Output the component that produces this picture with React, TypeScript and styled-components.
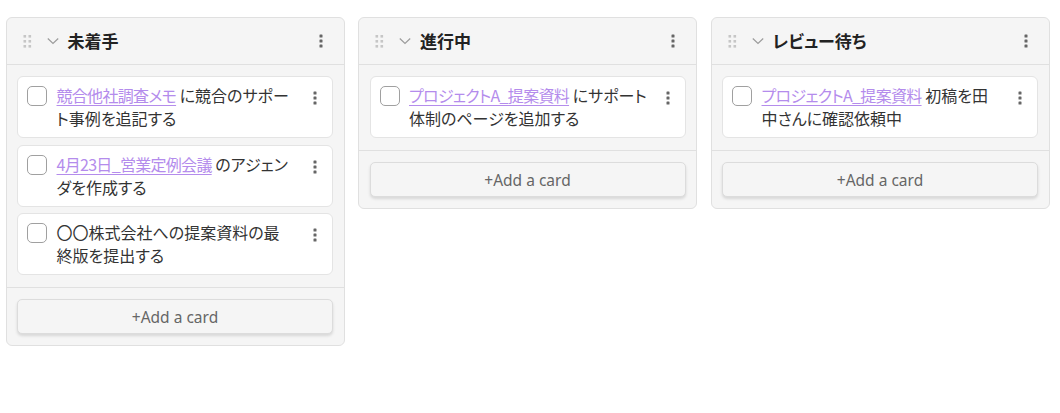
import React from "react";
import styled, { createGlobalStyle } from "styled-components";

const GlobalStyle = createGlobalStyle`
  html, body { margin: 0; padding: 0; background: #ffffff; }
  body {
    font-family: "Noto Sans", "Noto Sans CJK JP", sans-serif;
    color: #333333;
  }
  * { box-sizing: border-box; }
`;

const Board = styled.div`
  display: flex;
  align-items: flex-start;
  gap: 13.5px;
  padding: 17px 0 0 5.5px;
`;

const Column = styled.section`
  width: 339px;
  flex: none;
  background: #f5f5f5;
  border: 1px solid #e0e0e0;
  border-radius: 6px;
  display: flex;
  flex-direction: column;
`;

const Header = styled.header`
  height: 47px;
  display: flex;
  align-items: center;
  padding: 0 17px 0 16px;
  border-bottom: 1px solid #e0e0e0;
`;

const Handle = styled.span`
  display: inline-flex;
  width: 9px;
  height: 14px;
  color: #c6c6c6;
`;

const Chevron = styled.span`
  display: inline-flex;
  margin-left: 15px;
  width: 12px;
  height: 8px;
  color: #9c9c9c;
`;

const Title = styled.h2`
  margin: 0 0 0 9px;
  flex: 1;
  font-size: 17px;
  font-weight: 700;
  color: #222222;
  font-family: "Noto Sans CJK JP", sans-serif;
  font-feature-settings: "palt";
  line-height: 22px;
`;

const Kebab = styled.span`
  display: inline-flex;
  width: 12px;
  height: 16px;
  color: #666666;
`;

const CardList = styled.div`
  display: flex;
  flex-direction: column;
  gap: 6.5px;
  padding: 11px 10.5px 11.5px;
  border-bottom: 1px solid #e0e0e0;
`;

const Card = styled.div`
  background: #ffffff;
  border: 1px solid #e4e4e4;
  border-radius: 6px;
  display: flex;
  align-items: flex-start;
  padding: 7px 11px 7px 9px;
  min-height: 62px;
`;

const Check = styled.span`
  flex: none;
  width: 20px;
  height: 20px;
  border: 1px solid #a0a0a0;
  border-radius: 5px;
  background: #ffffff;
  margin-top: 2px;
`;

const Text = styled.p`
  margin: 0 13.5px 0 9.5px;
  flex: 1;
  font-size: 16px;
  line-height: 23px;
  color: #333333;
  font-family: "Noto Sans CJK JP", sans-serif;
  font-feature-settings: "palt";
  word-break: break-all;
`;

const Link = styled.a`
  color: #b48cec;
  letter-spacing: -0.7px;
  text-decoration: underline;
  text-decoration-thickness: 1px;
  text-underline-offset: 3px;
`;

const CardMenu = styled.span`
  flex: none;
  display: inline-flex;
  width: 12px;
  height: 16px;
  margin-top: 6px;
  color: #666666;
`;

const Footer = styled.div`
  padding: 11.5px 10.5px 10.5px;
`;

const AddButton = styled.button`
  width: 100%;
  height: 35px;
  border: 1px solid #dcdcdc;
  border-radius: 5px;
  background: #f5f5f5;
  box-shadow: 0 2px 3px rgba(0, 0, 0, 0.12);
  font-family: "Noto Sans", sans-serif;
  font-size: 15.5px;
  color: #666666;
  padding: 0;
`;

const DragIcon = () => (
  <svg width="9" height="14" viewBox="0 0 9 14" fill="currentColor">
    {[1, 6, 11].map((y) =>
      [0.5, 5.5].map((x) => <rect key={`${x}-${y}`} x={x} y={y} width="2.6" height="2.6" />)
    )}
  </svg>
);

const ChevronIcon = () => (
  <svg width="12" height="8" viewBox="0 0 12 8" fill="none" stroke="currentColor" strokeWidth="1.2">
    <path d="M0.8 1.5 L6 6.5 L11.2 1.5" />
  </svg>
);

const DotsIcon = () => (
  <svg width="12" height="16" viewBox="0 0 12 16" fill="currentColor">
    <rect x="4.5" y="1.5" width="3" height="3" rx="0.6" />
    <rect x="4.5" y="6.5" width="3" height="3" rx="0.6" />
    <rect x="4.5" y="11.5" width="3" height="3" rx="0.6" />
  </svg>
);

type CardData = { link?: string; text: string };
type ColumnData = { title: string; cards: CardData[] };

const columns: ColumnData[] = [
  {
    title: "未着手",
    cards: [
      { link: "競合他社調査メモ", text: " に競合のサポート事例を追記する" },
      { link: "4月23日_営業定例会議", text: " のアジェンダを作成する" },
      { text: "〇〇株式会社への提案資料の最終版を提出する" },
    ],
  },
  {
    title: "進行中",
    cards: [{ link: "プロジェクトA_提案資料", text: " にサポート体制のページを追加する" }],
  },
  {
    title: "レビュー待ち",
    cards: [{ link: "プロジェクトA_提案資料", text: " 初稿を田中さんに確認依頼中" }],
  },
];

export default function App() {
  return (
    <>
      <GlobalStyle />
      <Board>
        {columns.map((col) => (
          <Column key={col.title}>
            <Header>
              <Handle><DragIcon /></Handle>
              <Chevron><ChevronIcon /></Chevron>
              <Title>{col.title}</Title>
              <Kebab><DotsIcon /></Kebab>
            </Header>
            <CardList>
              {col.cards.map((c, i) => (
                <Card key={i}>
                  <Check />
                  <Text>
                    {c.link && <Link>{c.link}</Link>}
                    {c.text}
                  </Text>
                  <CardMenu><DotsIcon /></CardMenu>
                </Card>
              ))}
            </CardList>
            <Footer>
              <AddButton>+Add a card</AddButton>
            </Footer>
          </Column>
        ))}
      </Board>
    </>
  );
}
